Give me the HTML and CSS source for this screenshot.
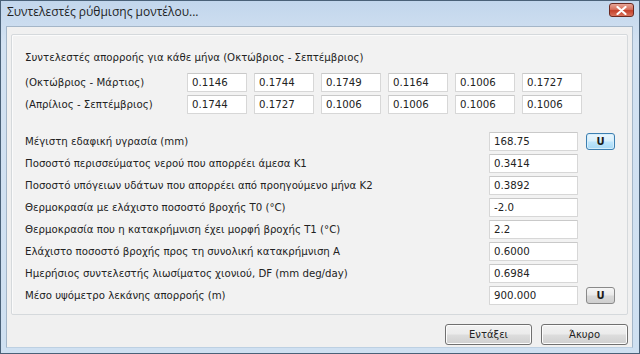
FILE: index.html
```html
<!DOCTYPE html>
<html lang="el">

<head>
    <meta charset="UTF-8">
    <title>Συντελεστές ρύθμισης μοντέλου...</title>
    <link rel="stylesheet" href="styles.css">
</head>

<body>
    <div class="window">
        <div class="titlebar">
            <span class="title">Συντελεστές ρύθμισης μοντέλου...</span>
            <button class="close" title="Κλείσιμο">
                <svg width="11" height="9" viewBox="0 0 11 9">
                    <path d="M1.5 1 L9.5 8 M9.5 1 L1.5 8" stroke="#fff" stroke-width="2.2" stroke-linecap="round" />
                </svg>
            </button>
        </div>

        <div class="client">
            <div class="panel">
                <div class="heading">Συντελεστές απορροής για κάθε μήνα (Οκτώβριος - Σεπτέμβριος)</div>

                <div class="month-row">
                    <span class="month-label">(Οκτώβριος - Μάρτιος)</span>
                    <div class="month-inputs">
                        <input class="field small" value="0.1146">
                        <input class="field small" value="0.1744">
                        <input class="field small" value="0.1749">
                        <input class="field small" value="0.1164">
                        <input class="field small" value="0.1006">
                        <input class="field small" value="0.1727">
                    </div>
                </div>
                <div class="month-row">
                    <span class="month-label">(Απρίλιος - Σεπτέμβριος)</span>
                    <div class="month-inputs">
                        <input class="field small" value="0.1744">
                        <input class="field small" value="0.1727">
                        <input class="field small" value="0.1006">
                        <input class="field small" value="0.1006">
                        <input class="field small" value="0.1006">
                        <input class="field small" value="0.1006">
                    </div>
                </div>

                <div class="params">
                    <div class="param">
                        <span class="param-label">Μέγιστη εδαφική υγρασία (mm)</span>
                        <input class="field wide" value="168.75">
                        <button class="u-btn active">U</button>
                    </div>
                    <div class="param">
                        <span class="param-label">Ποσοστό περισσεύματος νερού που απορρέει άμεσα K1</span>
                        <input class="field wide" value="0.3414">
                    </div>
                    <div class="param">
                        <span class="param-label">Ποσοστό υπόγειων υδάτων που απορρέει από προηγούμενο μήνα K2</span>
                        <input class="field wide" value="0.3892">
                    </div>
                    <div class="param">
                        <span class="param-label">Θερμοκρασία με ελάχιστο ποσοστό βροχής T0 (°C)</span>
                        <input class="field wide" value="-2.0">
                    </div>
                    <div class="param">
                        <span class="param-label">Θερμοκρασία που η κατακρήμνιση έχει μορφή βροχής T1 (°C)</span>
                        <input class="field wide" value="2.2">
                    </div>
                    <div class="param">
                        <span class="param-label">Ελάχιστο ποσοστό βροχής προς τη συνολική κατακρήμνιση A</span>
                        <input class="field wide" value="0.6000">
                    </div>
                    <div class="param">
                        <span class="param-label">Ημερήσιος συντελεστής λιωσίματος χιονιού, DF (mm deg/day)</span>
                        <input class="field wide" value="0.6984">
                    </div>
                    <div class="param">
                        <span class="param-label">Μέσο υψόμετρο λεκάνης απορροής (m)</span>
                        <input class="field wide" value="900.000">
                        <button class="u-btn">U</button>
                    </div>
                </div>
            </div>

            <div class="actions">
                <button class="btn">Εντάξει</button>
                <button class="btn">Άκυρο</button>
            </div>
        </div>
    </div>
</body>

</html>
```

FILE: styles.css
```css
body {
    margin: 0;
    width: 640px;
    height: 354px;
    overflow: hidden;
    background: #fff;
}

.window {
    box-sizing: border-box;
    width: 640px;
    height: 354px;
    border: 1px solid #4a6178;
    background: linear-gradient(#c2d6ec 0%, #d3e2f2 12%, #cfe0f1 100%);
    display: flex;
    flex-direction: column;
    padding: 0 6px 5px 5px;
}

.titlebar {
    height: 25px;
    display: flex;
    align-items: center;
    justify-content: space-between;
}

.title {
    font-family: "Open Sans", "Noto Sans", sans-serif;
    font-size: 12px;
    color: #1e1e1e;
    padding-left: 1px;
    margin-top: -4px;
}

.close {
    width: 25px;
    height: 14px;
    margin-top: -7px;
    margin-right: -1px;
    padding: 0;
    border: 1px solid #6b2a22;
    border-radius: 3px;
    background: linear-gradient(#e6a597 0%, #d6705c 45%, #c4402a 55%, #d9735c 100%);
    display: flex;
    align-items: center;
    justify-content: center;
}

.client {
    flex: 1;
    background: #f0f0f0;
    border: 1px solid #a4b6c8;
    border-bottom-color: #bdd0e2;
    display: flex;
    flex-direction: column;
    padding: 7px 4px 0 4px;
    font-family: "DejaVu Sans", Verdana, sans-serif;
    font-size: 10.2px;
    color: #222;
}

.panel {
    height: 279px;
    border: 1px solid #d5d9dc;
    border-radius: 2px;
    background: #f2f2f2;
    padding: 0 0 0 13px;
    box-shadow: inset 1px 1px 0 #fbfbfb;
}

.heading {
    margin-top: 16px;
    height: 14px;
    line-height: 14px;
}

.month-row {
    display: flex;
    align-items: center;
    height: 19px;
    margin-top: 8px;
}

.month-row + .month-row {
    margin-top: 3px;
}

.month-label {
    width: 162px;
}

.month-inputs {
    display: flex;
    gap: 7px;
}

.field {
    box-sizing: border-box;
    height: 19px;
    border: 1px solid #d7d7d7;
    border-top-color: #c9c9c9;
    border-radius: 1px;
    background: #fff;
    font-family: "DejaVu Sans", Verdana, sans-serif;
    font-size: 10.2px;
    color: #222;
    padding: 0 4px;
    outline: none;
}

.small {
    width: 60px;
}

.wide {
    width: 89px;
}

.params {
    margin-top: 18px;
    display: flex;
    flex-direction: column;
    gap: 3px;
}

.param {
    display: flex;
    align-items: center;
    height: 19px;
}

.param-label {
    width: 464px;
}

.u-btn {
    margin-left: 8px;
    width: 29px;
    height: 17px;
    padding: 0;
    border: 1px solid #8a8a8a;
    border-radius: 3px;
    background: linear-gradient(#f6f6f6 0%, #e9e9e9 48%, #d9d9d9 52%, #cfcfcf 100%);
    font-family: "DejaVu Sans", Verdana, sans-serif;
    font-size: 10px;
    font-weight: bold;
    color: #1b1b1b;
}

.u-btn.active {
    border-color: #3c7fb1;
    background: linear-gradient(#eaf6fd 0%, #d9f0fc 48%, #bee6fd 52%, #a7d9f5 100%);
    box-shadow: inset 0 0 0 1px #d6eefb;
}

.actions {
    display: flex;
    justify-content: flex-end;
    gap: 9px;
    margin-top: 9px;
}

.btn {
    width: 87px;
    height: 21px;
    padding: 0;
    border: 1px solid #707070;
    border-radius: 3px;
    background: linear-gradient(#f2f2f2 0%, #ebebeb 48%, #dddddd 52%, #cfcfcf 100%);
    box-shadow: inset 0 0 0 1px #fcfcfc;
    font-family: "DejaVu Sans", Verdana, sans-serif;
    font-size: 10px;
    color: #222;
}
```
